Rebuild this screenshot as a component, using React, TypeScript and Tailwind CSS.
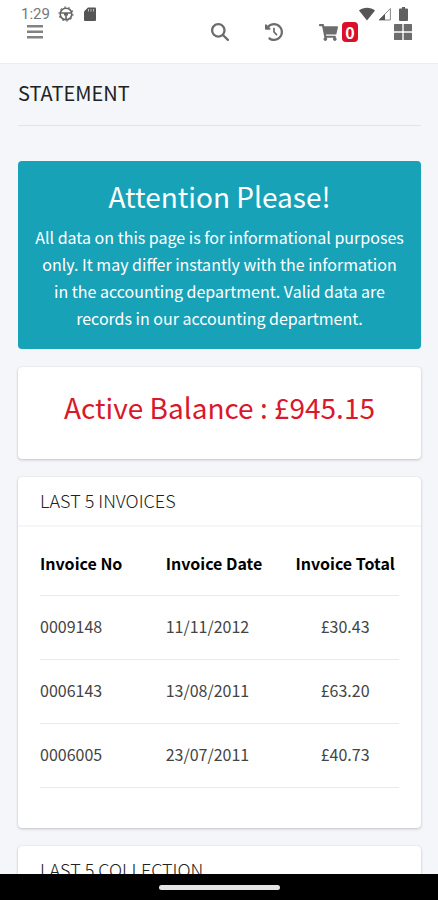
import React from 'react';
import { FaShoppingCart } from 'react-icons/fa';
import { FaClockRotateLeft, FaMagnifyingGlass } from 'react-icons/fa6';

interface Invoice {
  no: string;
  date: string;
  total: string;
}

const invoices: Invoice[] = [
  { no: '0009148', date: '11/11/2012', total: '£30.43' },
  { no: '0006143', date: '13/08/2011', total: '£63.20' },
  { no: '0006005', date: '23/07/2011', total: '£40.73' },
];

function StatusBar() {
  return (
    <div className="flex h-[22px] items-end justify-between pl-[21px] pr-[30px] text-[#666]">
      <div className="flex items-center">
        <span className="w-[30px] font-['Roboto',sans-serif] text-[15px] leading-4 text-[#777]">1:29</span>
        <svg className="ml-[7px] h-4 w-4" viewBox="0 0 16 16" fill="none" stroke="currentColor">
          <circle cx="8" cy="8" r="5.8" strokeWidth="1.6" />
          <circle cx="8" cy="8" r="7" strokeWidth="1" strokeDasharray="2 2.4" />
          <path d="M2.5 7h11M8 8v5.5" strokeWidth="1.6" />
          <path d="M6 7h4v2.5H6z" fill="currentColor" stroke="none" />
        </svg>
        <svg className="ml-2.5 h-4 w-3" viewBox="0 0 12 16">
          <path d="M4 1.5h7a1 1 0 0 1 1 1V14a1 1 0 0 1-1 1H1a1 1 0 0 1-1-1V5.500z" fill="#555" />
          <path d="M4.500 3v2.500M7 3v2.500M9.500 3v2.500" stroke="#bbb" strokeWidth="1" />
        </svg>
      </div>
      <div className="flex items-center">
        <svg className="h-4 w-4" viewBox="0 0 16 16">
          <path d="M0 4.500C4.500.9 11.500.9 16 4.500L8 14.500z" fill="#555" />
        </svg>
        <svg className="ml-[3px] h-4 w-[13px]" viewBox="0 0 13 16">
          <path d="M12.400 2.500v11.500H1z" fill="none" stroke="#888" strokeWidth="1" />
          <path d="M7 8v6H1z" fill="#555" />
        </svg>
        <svg className="ml-2 h-4 w-[9px]" viewBox="0 0 9 16">
          <path d="M3 1h3v1.500h2a1 1 0 0 1 1 1V14a1 1 0 0 1-1 1H1a1 1 0 0 1-1-1V3.500a1 1 0 0 1 1-1h2z" fill="#606060" />
        </svg>
      </div>
    </div>
  );
}

function TopNav() {
  return (
    <nav className="flex h-[42px] items-start justify-between border-b border-[#e9edf1] pl-[27px] pr-[26px] text-[#6c6c6c]">
      <button aria-label="Menu" className="flex h-5 items-center">
        <svg className="h-4 w-4" viewBox="0 0 16 16" fill="#828282">
          <path d="M0 1h16v2.500H0zM0 6.500h16V9H0zM0 12h16v2.500H0z" />
        </svg>
      </button>
      <div className="flex h-5 items-center">
        <button aria-label="Search">
          <FaMagnifyingGlass size={18} />
        </button>
        <button aria-label="History" className="ml-9">
          <FaClockRotateLeft size={18} />
        </button>
        <button aria-label="Cart" className="ml-9 flex items-center gap-1">
          <FaShoppingCart size={19} />
          <span className="flex h-5 w-4 items-center justify-center rounded bg-[#dc0f2a] font-['Noto_Sans_CJK_SC',sans-serif] text-[16px] font-bold leading-5 text-white">
            0
          </span>
        </button>
        <button aria-label="Apps" className="ml-9">
          <svg className="h-[18px] w-[18px]" viewBox="0 0 18 18" fill="currentColor">
            <rect x="0" y="1" width="8.300" height="7.300" rx="0.5" />
            <rect x="9.700" y="1" width="8.300" height="7.300" rx="0.5" />
            <rect x="0" y="9.700" width="8.300" height="7.300" rx="0.5" />
            <rect x="9.700" y="9.700" width="8.300" height="7.300" rx="0.5" />
          </svg>
        </button>
      </div>
    </nav>
  );
}

function Card({ title, children }: { title?: string; children?: React.ReactNode }) {
  return (
    <section className="rounded bg-white shadow-[0_0_1px_rgba(0,0,0,0.13),0_1px_3px_rgba(0,0,0,0.2)]">
      {title && (
        <h2 className="border-b-2 border-[#f5f6f7] px-[22px] pb-3 pt-2.5 text-[18px] font-light leading-[26px] text-[#222]">
          {title}
        </h2>
      )}
      {children}
    </section>
  );
}

export default function App() {
  return (
    <div className="flex h-screen flex-col overflow-hidden bg-[#f4f6fa] font-['Noto_Sans_CJK_SC',sans-serif] text-[#212529]">
      <header className="shrink-0 bg-white">
        <StatusBar />
        <TopNav />
      </header>

      <main className="min-h-0 flex-1 overflow-hidden pl-[18px] pr-[17px]">
        <h1 className="border-b border-[#e3e4e8] pb-[18px] pt-[14px] text-[20px] leading-[29px] text-[#222]">STATEMENT</h1>

        <div className="mt-[35px] flex flex-col gap-[18px]">
          <div className="rounded bg-[#17a2b8] px-4 pb-[17px] pt-[19px] text-center text-white">
            <h2 className="text-[28px] leading-8">Attention Please!</h2>
            <p className="mt-3 text-[16px] leading-[27px]">
              All data on this page is for informational purposes only. It may differ instantly with the information in the
              accounting department. Valid data are records in our accounting department.
            </p>
          </div>

          <Card>
            <p className="px-4 pb-[34px] pt-[22px] text-center text-[28px] leading-9 text-[#d9182b]">Active Balance : £945.15</p>
          </Card>

          <Card title="LAST 5 INVOICES">
            <div className="px-[22px] pb-10 pt-1">
              <table className="w-full table-fixed text-[16px] leading-6">
                <thead>
                  <tr className="h-16 border-b border-[#e9eaec] text-black">
                    <th className="w-[35%] text-left font-bold">Invoice No</th>
                    <th className="w-[35%] text-left font-bold">Invoice Date</th>
                    <th className="w-[30%] whitespace-nowrap text-center font-bold">Invoice Total</th>
                  </tr>
                </thead>
                <tbody className="text-[#444]">
                  {invoices.map((inv) => (
                    <tr key={inv.no} className="h-16 border-b border-[#e9eaec]">
                      <td className="pb-0.5">{inv.no}</td>
                      <td className="pb-0.5">{inv.date}</td>
                      <td className="pb-0.5 text-center">{inv.total}</td>
                    </tr>
                  ))}
                </tbody>
              </table>
            </div>
          </Card>

          <Card title="LAST 5 COLLECTION" />
        </div>
      </main>

      <footer className="flex h-[26px] shrink-0 items-center justify-center bg-black">
        <div className="h-[5px] w-[121px] rounded-full bg-[#e4e4e4]" />
      </footer>
    </div>
  );
}
